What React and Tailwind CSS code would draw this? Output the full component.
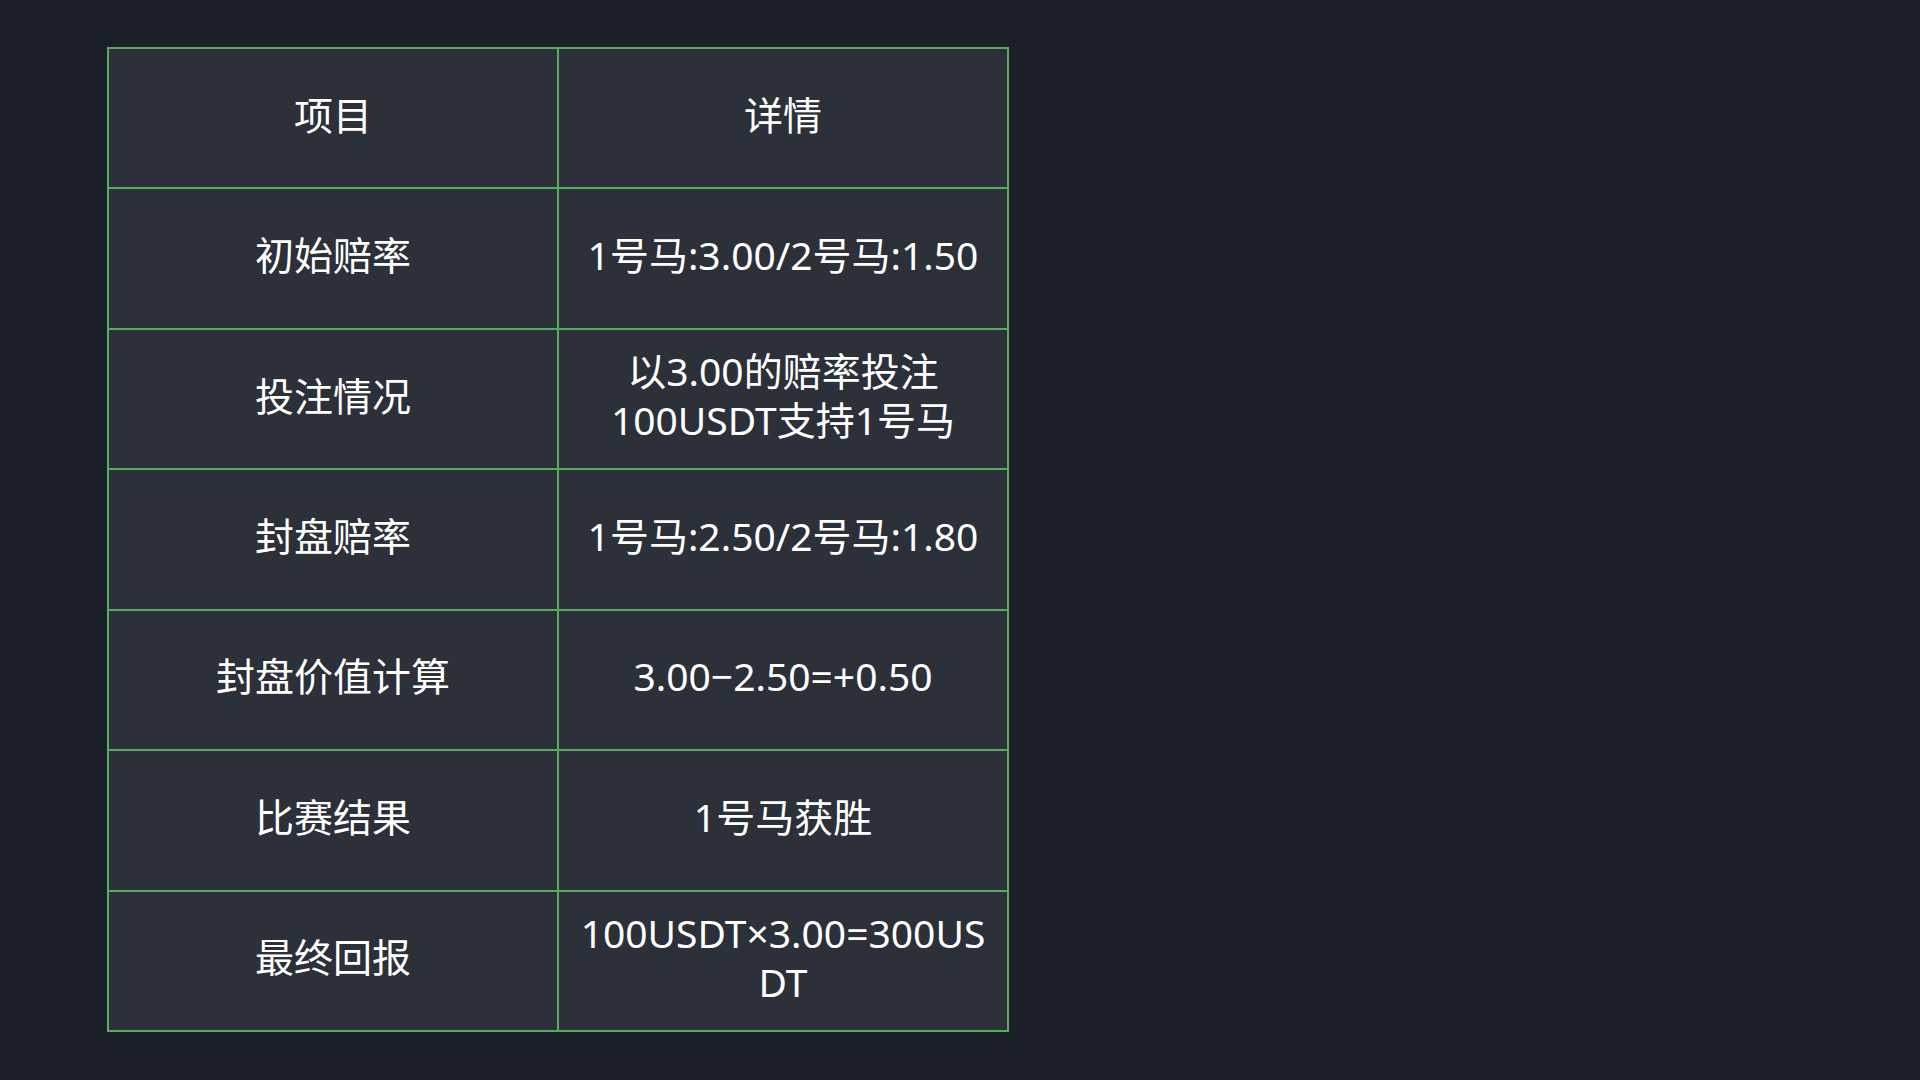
import React from 'react';

const rows = [
  ['项目', '详情'],
  ['初始赔率', '1号马:3.00/2号马:1.50'],
  ['投注情况', ['以3.00的赔率投注', '100USDT支持1号马']],
  ['封盘赔率', '1号马:2.50/2号马:1.80'],
  ['封盘价值计算', '3.00−2.50=+0.50'],
  ['比赛结果', '1号马获胜'],
  ['最终回报', ['100USDT×3.00=300US', 'DT']],
];

const Cell = ({ children }) => {
  const lines = Array.isArray(children) ? children : [children];
  return (
    <div className="flex flex-col items-center justify-center bg-[#2b3039] px-4 pb-[8px] text-center text-[39px] leading-[49px] text-white">
      {lines.map((line, i) => (
        <span key={i} className="whitespace-nowrap">{line}</span>
      ))}
    </div>
  );
};

const App = () => {
  return (
    <div
      className="min-h-screen w-full bg-[#1b1f27] pl-[107px] pt-[47px]"
      style={{ fontFamily: '"Noto Sans", "Noto Sans CJK SC", sans-serif' }}
    >
      {/* comparison table */}
      <div className="grid h-[985px] w-[902px] grid-cols-2 grid-rows-7 gap-[2px] bg-[#55ad5c] p-[2px]">
        {rows.map(([item, detail], i) => (
          <React.Fragment key={i}>
            <Cell>{item}</Cell>
            <Cell>{detail}</Cell>
          </React.Fragment>
        ))}
      </div>
    </div>
  );
};

export default App;
